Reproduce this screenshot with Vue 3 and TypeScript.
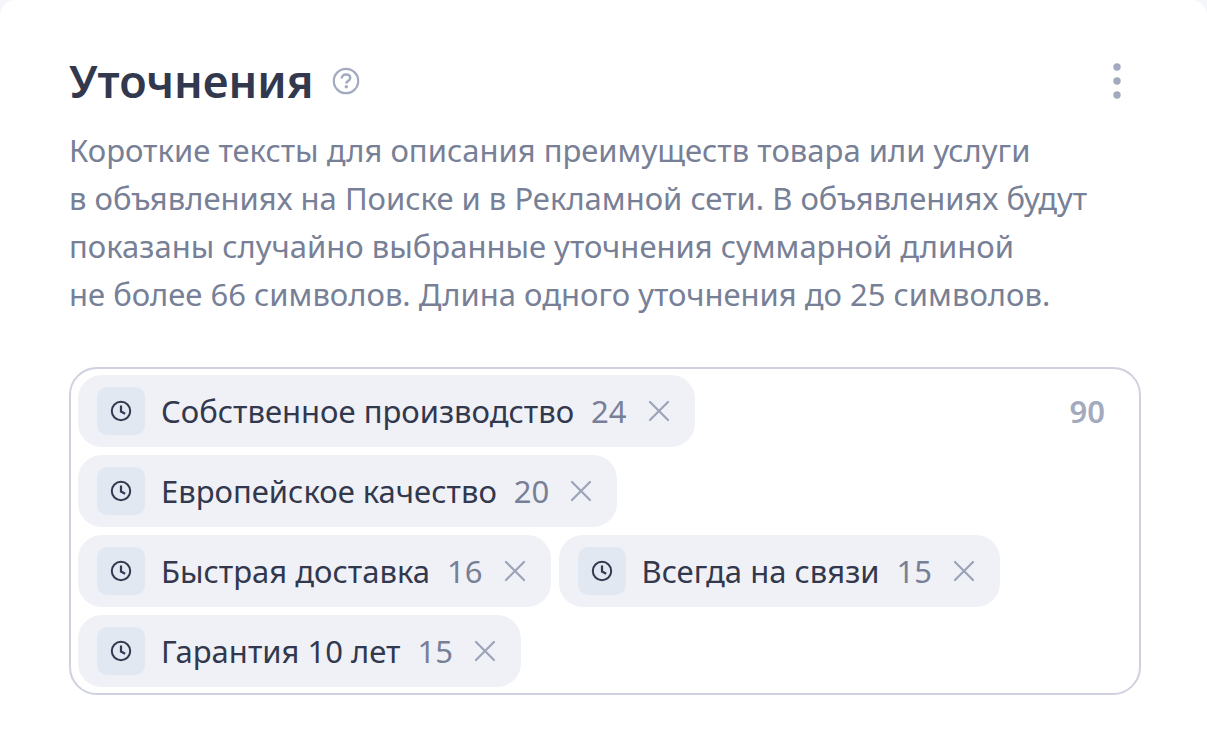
<script setup lang="ts">
import { ref } from 'vue'

interface Callout {
  id: number
  text: string
  length: number
}

const remaining = 90
const callouts = ref<Callout[]>([
  { id: 1, text: 'Собственное производство', length: 24 },
  { id: 2, text: 'Европейское качество', length: 20 },
  { id: 3, text: 'Быстрая доставка', length: 16 },
  { id: 4, text: 'Всегда на связи', length: 15 },
  { id: 5, text: 'Гарантия 10 лет', length: 15 },
])

function remove(id: number): void {
  callouts.value = callouts.value.filter((item) => item.id !== id)
}
</script>

<template>
  <section class="card" aria-labelledby="callouts-title">
    <header class="header">
      <h2 id="callouts-title" class="title">Уточнения</h2>
      <button class="icon-button help" type="button" aria-label="Справка">
        <svg width="28" height="28" viewBox="0 0 28 28" fill="none" stroke="currentColor" stroke-width="2.2">
          <circle cx="14" cy="14" r="12.2" />
          <path d="M9.700 11.400C9.700 9 11.400 7.600 14 7.600c2.500 0 4.200 1.400 4.200 3.400 0 3-3.900 2.700-3.900 5.600" stroke-width="2.500" />
          <circle cx="14.300" cy="19.700" r="1.700" fill="currentColor" stroke="none" />
        </svg>
      </button>
      <button class="icon-button menu" type="button" aria-label="Меню">
        <svg width="8" height="36" viewBox="0 0 8 36" fill="currentColor">
          <circle cx="4" cy="4" r="3.700" />
          <circle cx="4" cy="18" r="3.700" />
          <circle cx="4" cy="32" r="3.700" />
        </svg>
      </button>
    </header>

    <p class="description">
      Короткие тексты для описания преимуществ товара или услуги
      в&nbsp;объявлениях на&nbsp;Поиске и&nbsp;в&nbsp;Рекламной сети. В&nbsp;объявлениях будут
      показаны случайно выбранные уточнения суммарной длиной
      не&nbsp;более 66&nbsp;символов. Длина одного уточнения до&nbsp;25&nbsp;символов.
    </p>

    <div class="field">
      <ul class="chips">
        <li v-for="item in callouts" :key="item.id" class="chip">
          <span class="badge">
            <svg width="22" height="22" viewBox="0 0 22 22" fill="none" stroke="currentColor" stroke-width="2">
              <circle cx="11" cy="11" r="9.200" />
              <path d="M11 5.500V11.500L15.200 13.700" stroke-width="2.200" />
            </svg>
          </span>
          <span class="text">{{ item.text }}</span>
          <span class="length">{{ item.length }}</span>
          <button class="icon-button close" type="button" :aria-label="`Удалить: ${item.text}`" @click="remove(item.id)">
            <svg width="22" height="22" viewBox="0 0 22 22" fill="none" stroke="currentColor" stroke-width="2.200" stroke-linecap="round">
              <path d="M2 2L20 20M20 2L2 20" />
            </svg>
          </button>
        </li>
      </ul>
      <span class="remaining">{{ remaining }}</span>
    </div>
  </section>
</template>

<style>
body {
  margin: 0;
  background: #f5f6fa;
}
</style>

<style scoped>
.card {
  box-sizing: border-box;
  min-height: 100vh;
  padding: 51px 66px 54px 69px;
  border-radius: 16px 16px 0 0;
  background: #fff;
  color: #32384d;
  font-family: "Noto Sans", "Open Sans", sans-serif;
  font-size: 31px;
  line-height: 48px;
}

.header {
  display: flex;
  align-items: center;
}

.title {
  margin: 0;
  font-size: 45px;
  line-height: 60px;
  font-weight: 600;
}

.icon-button {
  display: flex;
  padding: 0;
  border: 0;
  background: none;
  color: #a3aabf;
  cursor: pointer;
}

.help {
  margin-left: 18px;
}

.menu {
  margin-left: auto;
  margin-right: 20px;
}

.description {
  margin: 15px 0 49px;
  color: #778096;
}

.field {
  display: flex;
  justify-content: space-between;
  padding: 6px 34px 6px 7px;
  border: 2px solid #cfd1de;
  border-radius: 28px;
}

.chips {
  display: flex;
  flex: 1;
  flex-wrap: wrap;
  gap: 8px;
  margin: 0;
  padding: 0;
  list-style: none;
}

.chip {
  display: flex;
  align-items: center;
  box-sizing: border-box;
  height: 72px;
  padding: 0 25px 0 19px;
  border-radius: 24px;
  background: #f0f1f6;
  white-space: nowrap;
}

.badge {
  display: flex;
  align-items: center;
  justify-content: center;
  width: 48px;
  height: 48px;
  margin-right: 16px;
  border-radius: 10px;
  background: #e2e8f2;
}

.length {
  margin-left: 17px;
  color: #778096;
}

.close {
  margin-left: 21px;
  color: #9ba3b9;
}

.remaining {
  line-height: 72px;
  font-weight: 600;
  color: #a3aabf;
}
</style>
